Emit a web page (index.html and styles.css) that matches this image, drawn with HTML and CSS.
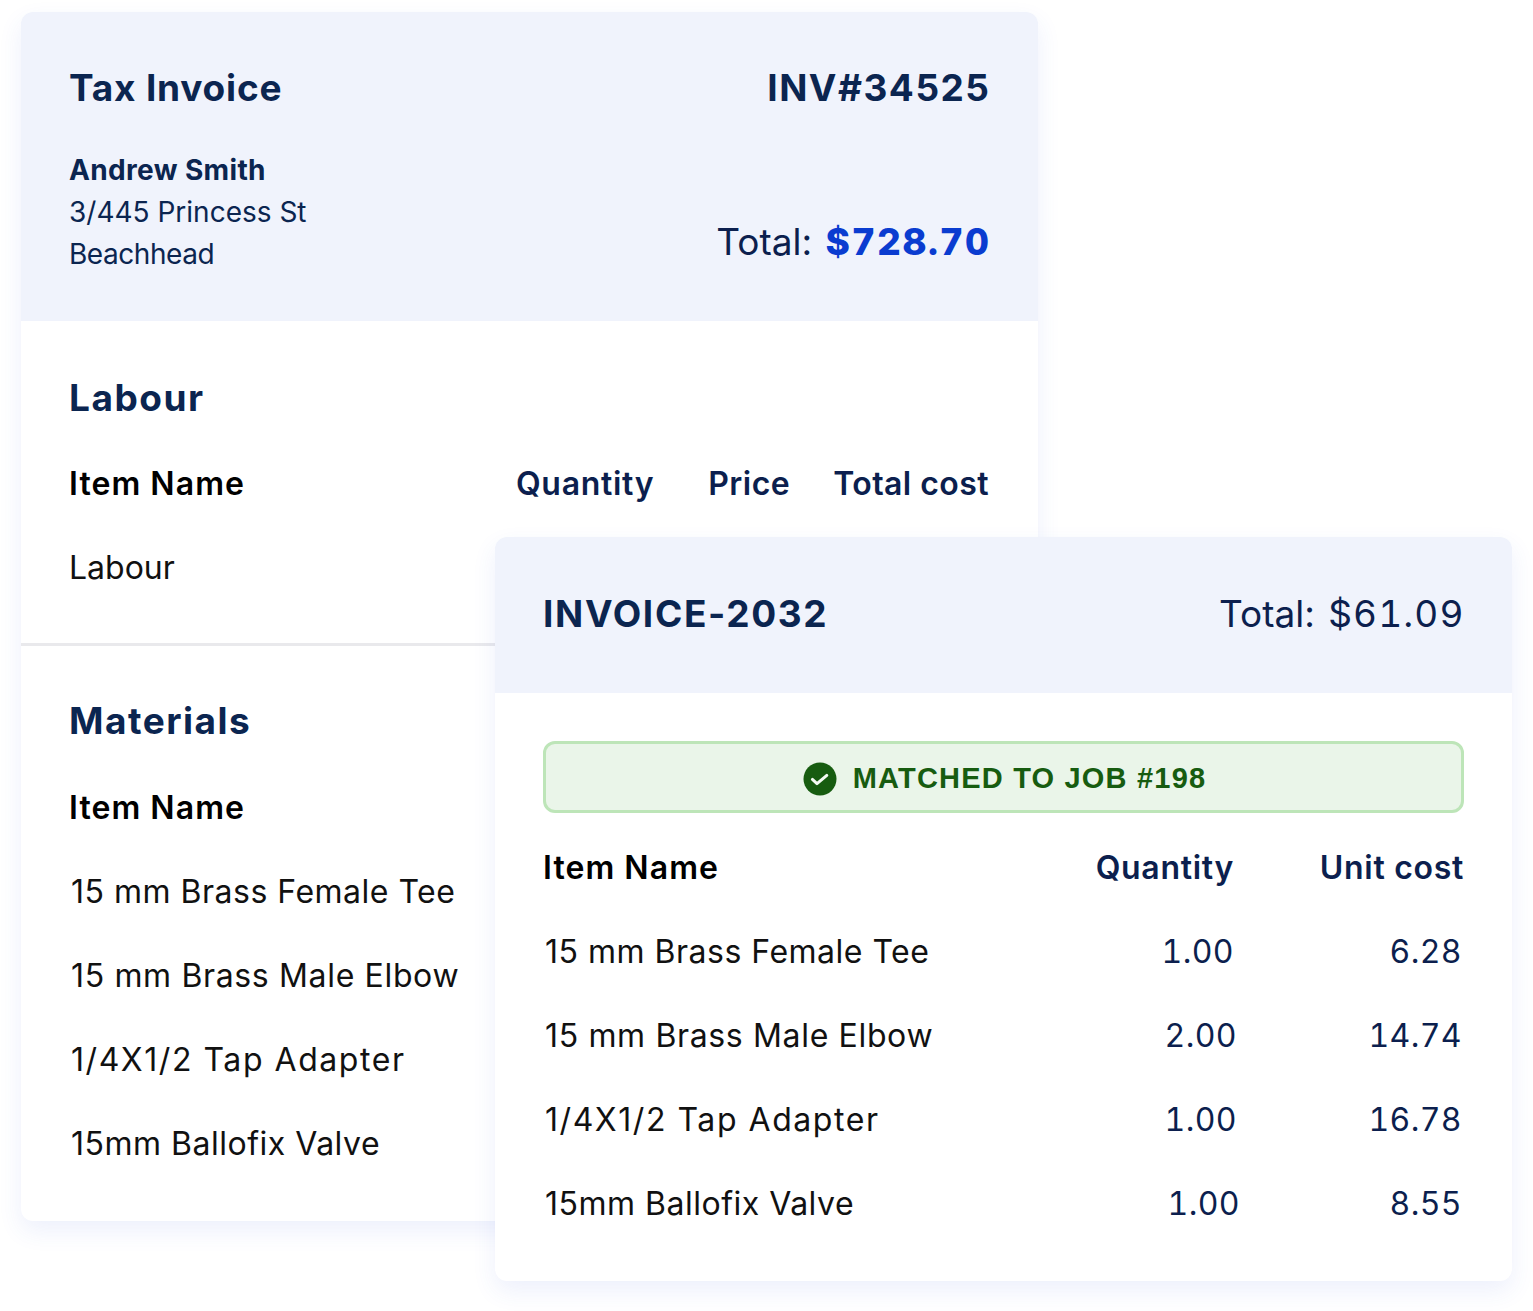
FILE: index.html
```html
<!DOCTYPE html>
<html lang="en">
<head>
<meta charset="utf-8">
<title>Invoices</title>
<link rel="stylesheet" href="styles.css">
</head>
<body>
<main class="canvas">
  <section class="card card-tax">
    <header class="tax-head">
      <div class="tax-top">
        <h1 class="title title-tax">Tax Invoice</h1>
        <div class="title title-end">INV#34525</div>
      </div>
      <div class="tax-bottom">
        <address class="addr">
          <strong>Andrew Smith</strong>
          <span>3/445 Princess St</span>
          <span class="addr-town">Beachhead</span>
        </address>
        <div class="grand">Total: <b class="amount">$728.70</b></div>
      </div>
    </header>
    <div class="section labour">
      <h2 class="title">Labour</h2>
      <div class="row row-head">
        <span class="item-h">Item Name</span>
        <span class="cols"><span class="col-q">Quantity</span><span class="col-p">Price</span><span class="col-t">Total cost</span></span>
      </div>
      <div class="row row-plain">Labour</div>
    </div>
    <div class="section materials">
      <h2 class="title">Materials</h2>
      <div class="row row-head row-head-mat"><span class="item-h">Item Name</span></div>
      <div class="row">15 mm Brass Female Tee</div>
      <div class="row row-wide">15 mm Brass Male Elbow</div>
      <div class="row row-tap">1/4X1/2 Tap Adapter</div>
      <div class="row">15mm Ballofix Valve</div>
    </div>
  </section>

  <section class="card card-match">
    <header class="match-head">
      <div class="title title-match">INVOICE-2032</div>
      <div class="grand">Total: <span class="amount">$61.09</span></div>
    </header>
    <div class="match-body">
      <div class="banner">
        <svg class="check" viewBox="0 0 34 34" aria-hidden="true"><circle cx="17" cy="17" r="16.5" fill="#175c10"/><path d="M9.4 17.4L14 21.6l9.8-8.2" fill="none" stroke="#f4fbf3" stroke-width="3" stroke-linecap="round" stroke-linejoin="round"/></svg>
        <span>MATCHED TO JOB #198</span>
      </div>
      <div class="grid">
        <span class="item-h">Item Name</span><span class="num-h">Quantity</span><span class="num-h">Unit cost</span>
        <span class="cell">15 mm Brass Female Tee</span><span class="num">1.00</span><span class="num n-cost">6.28</span>
        <span class="cell row-wide">15 mm Brass Male Elbow</span><span class="num n-q3">2.00</span><span class="num n-cost">14.74</span>
        <span class="cell row-tap">1/4X1/2 Tap Adapter</span><span class="num n-q3">1.00</span><span class="num n-cost">16.78</span>
        <span class="cell">15mm Ballofix Valve</span><span class="num n-q6">1.00</span><span class="num n-cost">8.55</span>
      </div>
    </div>
  </section>
</main>
</body>
</html>
```
FILE: styles.css
```css
* { box-sizing: border-box; }
html, body { margin: 0; background: #fff; }
body {
  font-family: "Inter", "Liberation Sans", sans-serif;
  color: #0b2550;
}
.canvas { position: relative; width: 1533px; height: 1311px; padding: 12px 0 0 21px; overflow: hidden; }
.card {
  width: 1017px;
  background: #fff;
  border-radius: 12px;
  box-shadow: 0 10px 24px rgba(60, 90, 220, 0.09);
  overflow: hidden;
}
.card-tax { height: 1209px; }
.card-match { position: absolute; left: 495px; top: 537px; height: 744px; }

.title { margin: 0; font-size: 37px; line-height: 44px; font-weight: 700; color: #0b2550; letter-spacing: 1.5px; }
.title-tax { letter-spacing: 0.8px; }
.title-end { margin-right: -1.5px; }
.title-match { letter-spacing: 1.65px; }
.tax-head { height: 309px; background: #f0f3fc; padding: 54px 49px 0 48px; }
.tax-top { display: flex; justify-content: space-between; }
.tax-bottom { display: flex; justify-content: space-between; margin-top: 39px; }
.addr { display: flex; flex-direction: column; font-style: normal; font-size: 28px; line-height: 42px; }
.addr strong { font-weight: 700; letter-spacing: 0.35px; }
.addr-town { letter-spacing: -0.45px; }
.grand { font-size: 37px; line-height: 44px; color: #0c1f4e; margin-top: 71px; margin-right: -1.5px; white-space: nowrap; }
.amount { margin-left: 3px; letter-spacing: 1.1px; font-variant-numeric: tabular-nums; }
b.amount { color: #0a3cd0; font-weight: 800; letter-spacing: 1.6px; }

.section { padding: 0 49px 0 48px; }
.labour { height: 325px; border-bottom: 3px solid #e9e9ec; padding-top: 55px; }
.materials { padding-top: 53px; }
.row { display: flex; justify-content: space-between; align-items: center; height: 84px; padding-left: 2px; font-size: 32px; color: #111; letter-spacing: 0.5px; }
.row-head { margin-top: 21px; padding-left: 0; letter-spacing: 1px; }
.row-head-mat { margin-top: 22px; }
.row-plain { letter-spacing: 0; padding-left: 0; }
.item-h { font-size: 32px; font-weight: 600; color: #000; letter-spacing: 1.05px; }
.cols { display: flex; font-size: 32px; font-weight: 600; color: #0c1f4e; letter-spacing: 0.45px; }
.col-q { letter-spacing: 0.7px; }
.col-p { margin-left: 54px; }
.col-t { margin-left: 43px; }

.match-head { display: flex; justify-content: space-between; align-items: center; height: 156px; background: #f0f3fc; padding: 0 49px 2px 48px; }
.match-head .grand { margin: 0 -1.5px 0 0; }
.match-body { padding: 48px 48px 0; }
.banner {
  display: flex; justify-content: center; align-items: center; gap: 16px;
  height: 72px; border: 3px solid #bde5b8; border-radius: 12px; background: #eaf5e9; padding: 3px 0 0 2px;
  color: #175c10; font-family: "Liberation Sans", sans-serif; font-size: 29px; font-weight: 700; letter-spacing: 1.2px; line-height: 1;
}
.check { width: 34px; height: 34px; }
.grid { display: grid; grid-template-columns: 1fr auto 230px; grid-auto-rows: 84px; align-items: center; margin-top: 12px; }
.num-h { font-size: 32px; font-weight: 600; text-align: right; color: #0c1f4e; letter-spacing: 0.7px; }
.cell { font-size: 32px; color: #111; letter-spacing: 0.5px; padding-left: 2px; }
.num { font-size: 32px; text-align: right; color: #0c1f4e; letter-spacing: 0.4px; font-variant-numeric: tabular-nums; }
.row-wide, .cell.row-wide { letter-spacing: 0.65px; }
.row-tap, .cell.row-tap { letter-spacing: 1.55px; }
.n-q3 { position: relative; left: 3px; }
.n-q6 { position: relative; left: 6px; }
.n-cost { position: relative; left: -2px; }
```
